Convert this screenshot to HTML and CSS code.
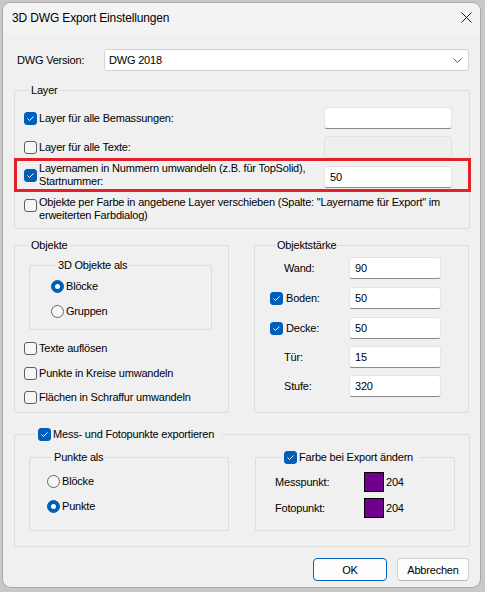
FILE: index.html
```html
<!DOCTYPE html>
<html lang="de">
<head>
<meta charset="utf-8">
<title>3D DWG Export Einstellungen</title>
<link rel="stylesheet" href="styles.css">
</head>
<body>
<div class="window">
  <div class="titlebar">
    <span class="title">3D DWG Export Einstellungen</span>
    <svg class="close" width="11" height="11" viewBox="0 0 11 11"><path d="M0.5 0.5 L10.5 10.5 M10.5 0.5 L0.5 10.5" stroke="#1b1b1b" stroke-width="1" fill="none"/></svg>
  </div>
  <div class="content">
    <div class="version-row">
      <span class="version-label">DWG Version:</span>
      <div class="select"><span>DWG 2018</span><svg class="chev" width="9" height="5" viewBox="0 0 9 5"><path d="M0.5 0.5 L4.5 4.5 L8.5 0.5" stroke="#5a5a5a" stroke-width="1" fill="none"/></svg></div>
    </div>

    <div class="group layer-group">
      <div class="legend">Layer</div>
      <div class="lrow r1">
        <span class="cb on"><svg viewBox="0 0 13 13"><path d="M3.5 6.5 L5.5 8.5 L9.5 4.5" stroke="#fff" stroke-width="1" fill="none"/></svg></span>
        <span class="lbl">Layer für alle Bemassungen:</span>
        <span class="input"></span>
      </div>
      <div class="lrow r2">
        <span class="cb"></span>
        <span class="lbl">Layer für alle Texte:</span>
        <span class="input disabled"></span>
      </div>
      <div class="lrow r3 multi hl">
        <span class="cb on"><svg viewBox="0 0 13 13"><path d="M3.5 6.5 L5.5 8.5 L9.5 4.5" stroke="#fff" stroke-width="1" fill="none"/></svg></span>
        <span class="lbl">Layernamen in Nummern umwandeln (z.B. für TopSolid),<br>Startnummer:</span>
        <span class="input">50</span>
      </div>
      <div class="lrow r4 multi">
        <span class="cb"></span>
        <span class="lbl">Objekte per Farbe in angebene Layer verschieben (Spalte: "Layername für Export" im<br>erweiterten Farbdialog)</span>
      </div>
    </div>

    <div class="mid">
      <div class="group obj-group">
        <div class="legend">Objekte</div>
        <div class="group inner obj-inner">
          <div class="legend">3D Objekte als</div>
          <div class="opt o1"><span class="rb on"><span class="dot"></span></span><span class="olbl">Blöcke</span></div>
          <div class="opt o2"><span class="rb"></span><span class="olbl">Gruppen</span></div>
        </div>
        <div class="opt c1"><span class="cb"></span><span class="olbl">Texte auflösen</span></div>
        <div class="opt c2"><span class="cb"></span><span class="olbl">Punkte in Kreise umwandeln</span></div>
        <div class="opt c3"><span class="cb"></span><span class="olbl">Flächen in Schraffur umwandeln</span></div>
      </div>

      <div class="group st-group">
        <div class="legend">Objektstärke</div>
        <div class="srow s1"><span class="slbl indent">Wand:</span><span class="input">90</span></div>
        <div class="srow s2"><span class="cb on"><svg viewBox="0 0 13 13"><path d="M3.5 6.5 L5.5 8.5 L9.5 4.5" stroke="#fff" stroke-width="1" fill="none"/></svg></span><span class="slbl">Boden:</span><span class="input">50</span></div>
        <div class="srow s3"><span class="cb on"><svg viewBox="0 0 13 13"><path d="M3.5 6.5 L5.5 8.5 L9.5 4.5" stroke="#fff" stroke-width="1" fill="none"/></svg></span><span class="slbl">Decke:</span><span class="input">50</span></div>
        <div class="srow s4"><span class="slbl indent">Tür:</span><span class="input">15</span></div>
        <div class="srow s5"><span class="slbl indent">Stufe:</span><span class="input">320</span></div>
      </div>
    </div>

    <div class="group mess-group">
      <div class="legend cblegend mess-legend">
        <span class="cb on"><svg viewBox="0 0 13 13"><path d="M3.5 6.5 L5.5 8.5 L9.5 4.5" stroke="#fff" stroke-width="1" fill="none"/></svg></span>
        <span class="olbl">Mess- und Fotopunkte exportieren</span>
      </div>
      <div class="mess-row">
        <div class="group inner pk-group">
          <div class="legend">Punkte als</div>
          <div class="opt p1"><span class="rb"></span><span class="olbl">Blöcke</span></div>
          <div class="opt p2"><span class="rb on"><span class="dot"></span></span><span class="olbl">Punkte</span></div>
        </div>
        <div class="group inner fb-group">
          <div class="legend cblegend fb-legend">
            <span class="cb on"><svg viewBox="0 0 13 13"><path d="M3.5 6.5 L5.5 8.5 L9.5 4.5" stroke="#fff" stroke-width="1" fill="none"/></svg></span>
            <span class="olbl">Farbe bei Export ändern</span>
          </div>
          <div class="crow f1"><span class="clbl">Messpunkt:</span><span class="swatch"></span><span class="cnum">204</span></div>
          <div class="crow f2"><span class="clbl">Fotopunkt:</span><span class="swatch"></span><span class="cnum">204</span></div>
        </div>
      </div>
    </div>

    <div class="buttons">
      <button class="btn ok">OK</button>
      <button class="btn cancel">Abbrechen</button>
    </div>
  </div>
</div>
</body>
</html>
```
FILE: styles.css
```css
* { box-sizing: border-box; }
html, body { margin: 0; padding: 0; }
body {
  width: 485px;
  height: 592px;
  background: #c8c8c8;
  font-family: "Liberation Sans", Arial, sans-serif;
  font-size: 11px;
  letter-spacing: -0.2px;
  color: #000;
  overflow: hidden;
  white-space: nowrap;
}
.window {
  margin: 3px 0 0 3px;
  width: 477px;
  height: 584px;
  background: #f0f0f0;
  border-radius: 8px;
  box-shadow: 0 0 0 1px #a9a9a9;
  overflow: hidden;
}
.titlebar {
  height: 32px;
  background: #f3f3f3;
  display: flex;
  align-items: center;
  padding: 0 8px 3px 9px;
  line-height: 16px;
}
.title { font-size: 12px; letter-spacing: -0.15px; }
.close { margin-left: auto; display: block; }
.content { padding: 0 10px 0 11px; }

.version-row {
  margin-top: 14px;
  display: flex;
  align-items: center;
  height: 22px;
}
.version-label { width: 90px; padding-left: 3px; }
.select {
  width: 365px;
  height: 22px;
  background: #fff;
  border: 1px solid #d3d3d3;
  border-radius: 3px;
  display: flex;
  align-items: center;
  padding: 0 6px 0 4px;
}
.chev { margin-left: auto; display: block; }

.group {
  border: 1px solid #dcdcdc;
  border-radius: 2px;
}
.legend {
  width: fit-content;
  margin: -9px 0 0 5px;
  padding: 1px 2px 0;
  line-height: 15px;
  height: 16px;
  background: #f0f0f0;
}
.cblegend { display: flex; align-items: center; padding-top: 0; }

.cb {
  width: 13px;
  height: 13px;
  flex: none;
  border: 1px solid #5e5e5e;
  border-radius: 3px;
  background: #f6f6f6;
  display: block;
}
.cb.on { background: #005fb8; border-color: #005fb8; }
.cb svg { display: block; width: 13px; height: 13px; margin: -1px; }
.rb {
  width: 13px;
  height: 13px;
  flex: none;
  border: 1px solid #666;
  border-radius: 50%;
  background: #f6f6f6;
  display: flex;
  align-items: center;
  justify-content: center;
}
.rb.on { background: #005fb8; border-color: #005fb8; }
.rb .dot { width: 5px; height: 5px; border-radius: 50%; background: #fff; }

.input {
  display: block;
  flex: none;
  height: 22px;
  background: #fff;
  border: 1px solid #e4e4e4;
  border-bottom-color: #8a8a8a;
  border-radius: 3px;
  padding: 0 5px;
  line-height: 20px;
}
.input.disabled { background: #efefef; border-color: #e2e2e2; }

/* Layer group */
.layer-group { margin-top: 19px; padding: 0 17px 0 9px; height: 139px; }
.lrow { display: flex; align-items: center; }
.lrow .lbl { flex: 1; margin-left: 2px; line-height: 16px; }
.lrow .input { width: 128px; }
.r1 { margin-top: 9px; height: 22px; }
.r2 { margin-top: 7px; height: 22px; }
.lrow.multi { align-items: flex-start; }
.multi .lbl { line-height: 13px; }
.r3 { margin-top: 4px; height: 26px; position: relative; }
.r3 .cb { margin-top: 7px; }
.r3 .input { margin-top: 4px; }
.r4 { margin-top: 8px; height: 26px; }
.r4 .cb { margin-top: 3px; }
.hl::after {
  content: "";
  position: absolute;
  left: -10px;
  right: -19px;
  top: -4px;
  bottom: -4px;
  border: 3px solid #e5202a;
  pointer-events: none;
}

/* middle */
.mid { display: flex; gap: 25px; margin-top: 16px; }
.obj-group, .st-group { width: 215px; height: 168px; }
.obj-group { padding: 0 0 0 9px; }
.opt { display: flex; align-items: center; height: 16px; line-height: 16px; }
.olbl { margin-left: 2px; }
.obj-inner { margin-top: 12px; margin-left: 5px; width: 183px; height: 65px; padding-left: 21px; }
.o1 { margin-top: 5px; }
.o2 { margin-top: 9px; }
.c1 { margin-top: 10px; }
.c2 { margin-top: 9px; }
.c3 { margin-top: 8px; }

.st-group { padding: 0 27px 0 15px; }
.srow { display: flex; align-items: center; height: 22px; }
.slbl { flex: 1; margin-left: 3px; line-height: 16px; }
.slbl.indent { margin-left: 14px; }
.srow .input { width: 92px; }
.s1 { margin-top: 4px; }
.s2 { margin-top: 8px; }
.s3 { margin-top: 8px; }
.s4 { margin-top: 7px; }
.s5 { margin-top: 7px; }

/* mess */
.mess-group { margin-top: 21px; height: 113px; padding-left: 14px; }
.mess-legend { margin-left: 7px; padding-right: 8px; }
.mess-row { display: flex; gap: 26px; margin-top: 15px; }
.pk-group, .fb-group { width: 200px; height: 74px; }
.pk-group { padding-left: 17px; }
.p1 { margin-top: 8px; }
.p2 { margin-top: 9px; }
.fb-group { padding-left: 19px; }
.fb-legend { margin-left: 7px; padding-right: 6px; }
.crow { display: flex; align-items: center; height: 20px; }
.clbl { width: 89px; }
.swatch { width: 20px; height: 20px; border: 1px solid #000; background: #70008c; }
.cnum { margin-left: 2px; }
.f1 { margin-top: 7px; }
.f2 { margin-top: 6px; }

.buttons {
  display: flex;
  justify-content: flex-end;
  gap: 10px;
  margin-top: 11px;
  margin-right: 1px;
}
.btn {
  height: 23px;
  font: inherit;
  letter-spacing: inherit;
  color: #000;
  background: #fdfdfd;
  border: 1px solid #d0d0d0;
  border-bottom-color: #b8b8b8;
  border-radius: 4px;
  padding: 0;
}
.btn.ok { width: 74px; border-color: #0067c0; }
.btn.cancel { width: 72px; }
```
